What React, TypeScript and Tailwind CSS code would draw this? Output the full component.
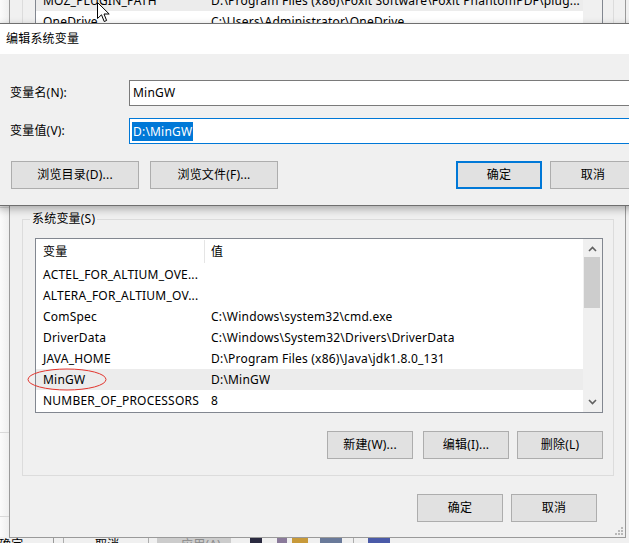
import React from "react";

type VarItem = { name: string; value: string; hover?: boolean };

const userVars: VarItem[] = [
  {
    name: "MOZ_PLUGIN_PATH",
    value: "D:\\Program Files (x86)\\Foxit Software\\Foxit PhantomPDF\\plug...",
    hover: true,
  },
  { name: "OneDrive", value: "C:\\Users\\Administrator\\OneDrive" },
];

const systemVars: VarItem[] = [
  { name: "ACTEL_FOR_ALTIUM_OVE...", value: "" },
  { name: "ALTERA_FOR_ALTIUM_OV...", value: "" },
  { name: "ComSpec", value: "C:\\Windows\\system32\\cmd.exe" },
  { name: "DriverData", value: "C:\\Windows\\System32\\Drivers\\DriverData" },
  { name: "JAVA_HOME", value: "D:\\Program Files (x86)\\Java\\jdk1.8.0_131" },
  { name: "MinGW", value: "D:\\MinGW", hover: true },
  { name: "NUMBER_OF_PROCESSORS", value: "8" },
];

function VarRow({ item }: { item: VarItem }) {
  return (
    <div
      className={`flex h-[21px] shrink-0 items-center whitespace-nowrap ${
        item.hover ? "bg-[#ececec]" : ""
      }`}
    >
      <div className="w-[169px] shrink-0 overflow-hidden pl-[7px]">{item.name}</div>
      <div className="overflow-hidden pl-[6px]">{item.value}</div>
    </div>
  );
}

function WinButton({
  children,
  className = "",
  primary = false,
}: {
  children: React.ReactNode;
  className?: string;
  primary?: boolean;
}) {
  const frame = primary ? "border-2 border-[#0078d7]" : "border border-[#adadad]";
  return (
    <button
      type="button"
      className={`flex h-[28px] shrink-0 items-center justify-center bg-[#e1e1e1] text-[12px] leading-none text-black ${frame} ${className}`}
    >
      {children}
    </button>
  );
}

function Chevron({ up }: { up?: boolean }) {
  return (
    <svg width="9" height="6" viewBox="0 0 9 6">
      <path
        d={up ? "M1 5 L4.5 1.5 L8 5" : "M1 1 L4.5 4.5 L8 1"}
        fill="none"
        stroke="#606060"
        strokeWidth="1.6"
      />
    </svg>
  );
}

function ScrollBar() {
  return (
    <div className="flex w-[19px] shrink-0 flex-col bg-[#f0f0f0]">
      <div className="flex h-[18px] items-center justify-center pt-[2px]">
        <Chevron up />
      </div>
      <div className="flex-1 pl-[1px] pr-[2px]">
        <div className="h-[51px] bg-[#cdcdcd]" />
      </div>
      <div className="flex h-[18px] items-center justify-center pb-[2px]">
        <Chevron />
      </div>
    </div>
  );
}

function Cursor() {
  return (
    <svg width="13" height="21" viewBox="0 0 13 21" className="absolute left-[97px] top-[2px]">
      <path
        d="M0.5 0.5 L0.5 16.5 L4.5 12.8 L7.2 19.5 L9.6 18.5 L7 12 L12.2 12 Z"
        fill="#ffffff"
        stroke="#000000"
        strokeWidth="1"
        strokeLinejoin="round"
      />
    </svg>
  );
}

function ResizeGrip() {
  const dots = [
    [6, 0],
    [3, 3],
    [6, 3],
    [0, 6],
    [3, 6],
    [6, 6],
  ];
  return (
    <svg width="8" height="8" viewBox="0 0 8 8">
      {dots.map(([x, y]) => (
        <rect key={`${x}-${y}`} x={x} y={y} width="2" height="2" fill="#b8b8b8" />
      ))}
    </svg>
  );
}

export default function App() {
  return (
    <div className="relative h-[543px] w-[629px] overflow-hidden bg-[#f0f0f0] font-['Noto_Sans','Noto_Sans_CJK_SC',sans-serif] text-[12px] tracking-[0.2px] text-black">
      {/* window behind, left edge */}
      <div className="absolute left-0 top-0 flex h-full w-[10px] flex-col bg-gradient-to-r from-[#fbfbfb] to-[#ededed]">
        <div className="h-[208px] border-b border-[#d9d9d9]" />
        <div className="h-[225px] border-b border-[#d9d9d9]" />
        <div className="h-[84px] border-b border-[#d9d9d9]" />
      </div>

      {/* window behind, bottom button row */}
      <div className="absolute left-0 top-[537px] h-[6px] w-full overflow-hidden bg-[#f0f0f0] leading-[14px]">
        <span className="absolute left-[-1px] top-[1px]">确定</span>
        <div className="absolute left-[53px] top-0 h-full border-l border-[#9a9a9a]" />
        <div className="absolute left-[63px] top-0 h-full border-l border-[#adadad]" />
        <span className="absolute left-[95px] top-[1px]">取消</span>
        <div className="absolute left-[148px] top-0 h-full border-l border-[#adadad]" />
        <div className="absolute left-[157px] top-0 h-full w-[74px] bg-[#cccccc]" />
        <span className="absolute left-[181px] top-[1px] text-[#8a8a8a]">应用(A)</span>
        <div className="absolute left-[250px] top-[1px] h-[5px] w-[12px] bg-[#2a2a40]" />
        <div className="absolute left-[277px] top-[1px] h-[5px] w-[10px] bg-[#8a7a9a]" />
        <div className="absolute left-[292px] top-[1px] h-[5px] w-[16px] bg-[#c89a3a]" />
        <div className="absolute left-[320px] top-[1px] h-[5px] w-[22px] bg-[#6a7a9a]" />
        <div className="absolute left-[353px] top-0 h-full border-l border-[#adadad]" />
        <div className="absolute left-[368px] top-[1px] h-[5px] w-[22px] bg-[#4a5aa8]" />
      </div>

      {/* environment variables window */}
      <div className="absolute left-[9px] top-0 flex h-[538px] w-[617px] flex-col border-x border-b border-[#9a9a9a] bg-[#f0f0f0]">
        {/* user variables list, scrolled */}
        <div className="relative h-[205px] shrink-0 overflow-hidden pl-[12px]">
          <div className="h-full w-[592px] border-x border-[#dcdcdc] pl-[12px] pr-[10px]">
            <div className="flex h-full border-x border-[#828790] bg-white">
              <div className="-mt-[10px] flex flex-1 flex-col overflow-hidden">
                {userVars.map((v) => (
                  <VarRow key={v.name} item={v} />
                ))}
              </div>
              <div className="w-[19px] shrink-0 bg-[#f0f0f0]" />
            </div>
          </div>
        </div>

        {/* system variables group */}
        <div className="relative ml-[12px] mt-[14px] flex h-[257px] w-[592px] shrink-0 flex-col border border-[#dcdcdc] pl-[12px] pr-[10px] pt-[18px]">
          <span className="absolute left-[7px] top-[-9px] bg-[#f0f0f0] px-[2px] leading-[16px]">
            系统变量(S)
          </span>
          <div className="flex h-[175px] shrink-0 border border-[#828790] bg-white">
            <div className="flex flex-1 flex-col overflow-hidden">
              <div className="flex h-[25px] shrink-0 items-center">
                <div className="flex h-[23px] w-[169px] shrink-0 items-center border-r border-[#e5e5e5] pl-[7px]">
                  变量
                </div>
                <div className="pl-[6px]">值</div>
              </div>
              {systemVars.map((v) => (
                <VarRow key={v.name} item={v} />
              ))}
            </div>
            <ScrollBar />
          </div>
          <div className="mt-[18px] flex justify-end">
            <WinButton className="w-[86px]">新建(W)...</WinButton>
            <WinButton className="ml-[10px] w-[86px]">编辑(I)...</WinButton>
            <WinButton className="ml-[8px] w-[86px]">删除(L)</WinButton>
          </div>
        </div>

        <div className="mr-[28px] mt-[18px] flex justify-end">
          <WinButton className="w-[86px]">确定</WinButton>
          <WinButton className="ml-[8px] w-[86px]">取消</WinButton>
        </div>

        <div className="mt-auto flex justify-end pb-[2px] pr-[2px]">
          <ResizeGrip />
        </div>
      </div>

      {/* highlight around MinGW */}
      <svg width="82" height="24" viewBox="0 0 82 24" className="absolute left-[27px] top-[368px]">
        <ellipse cx="40" cy="11.5" rx="39" ry="10.5" fill="none" stroke="#e2342d" strokeWidth="1" />
      </svg>

      <Cursor />

      {/* edit system variable dialog */}
      <div className="absolute left-[-2px] top-[23px] flex h-[183px] w-[650px] flex-col border border-[#6f6f6f] bg-[#f0f0f0] shadow-[0_3px_8px_rgba(0,0,0,0.3)]">
        <div className="flex h-[30px] shrink-0 items-center bg-white pl-[7px]">编辑系统变量</div>

        <div className="mt-[26px] flex items-center pl-[11px]">
          <div className="w-[119px] shrink-0">变量名(N):</div>
          <div className="flex h-[26px] flex-1 items-center border border-[#7a7a7a] bg-white pl-[3px]">
            MinGW
          </div>
        </div>

        <div className="mt-[12px] flex items-center pl-[11px]">
          <div className="w-[119px] shrink-0">变量值(V):</div>
          <div className="flex h-[26px] flex-1 items-center border border-[#0078d7] bg-white pl-[2px]">
            <span className="bg-[#0078d7] px-[1px] leading-[19px] text-white">D:\MinGW</span>
          </div>
        </div>

        <div className="mt-[17px] flex pl-[12px]">
          <WinButton className="w-[128px]">浏览目录(D)...</WinButton>
          <WinButton className="ml-[11px] w-[128px]">浏览文件(F)...</WinButton>
          <WinButton primary className="ml-[178px] w-[86px]">
            确定
          </WinButton>
          <WinButton className="ml-[8px] w-[86px]">取消</WinButton>
        </div>
      </div>
    </div>
  );
}
